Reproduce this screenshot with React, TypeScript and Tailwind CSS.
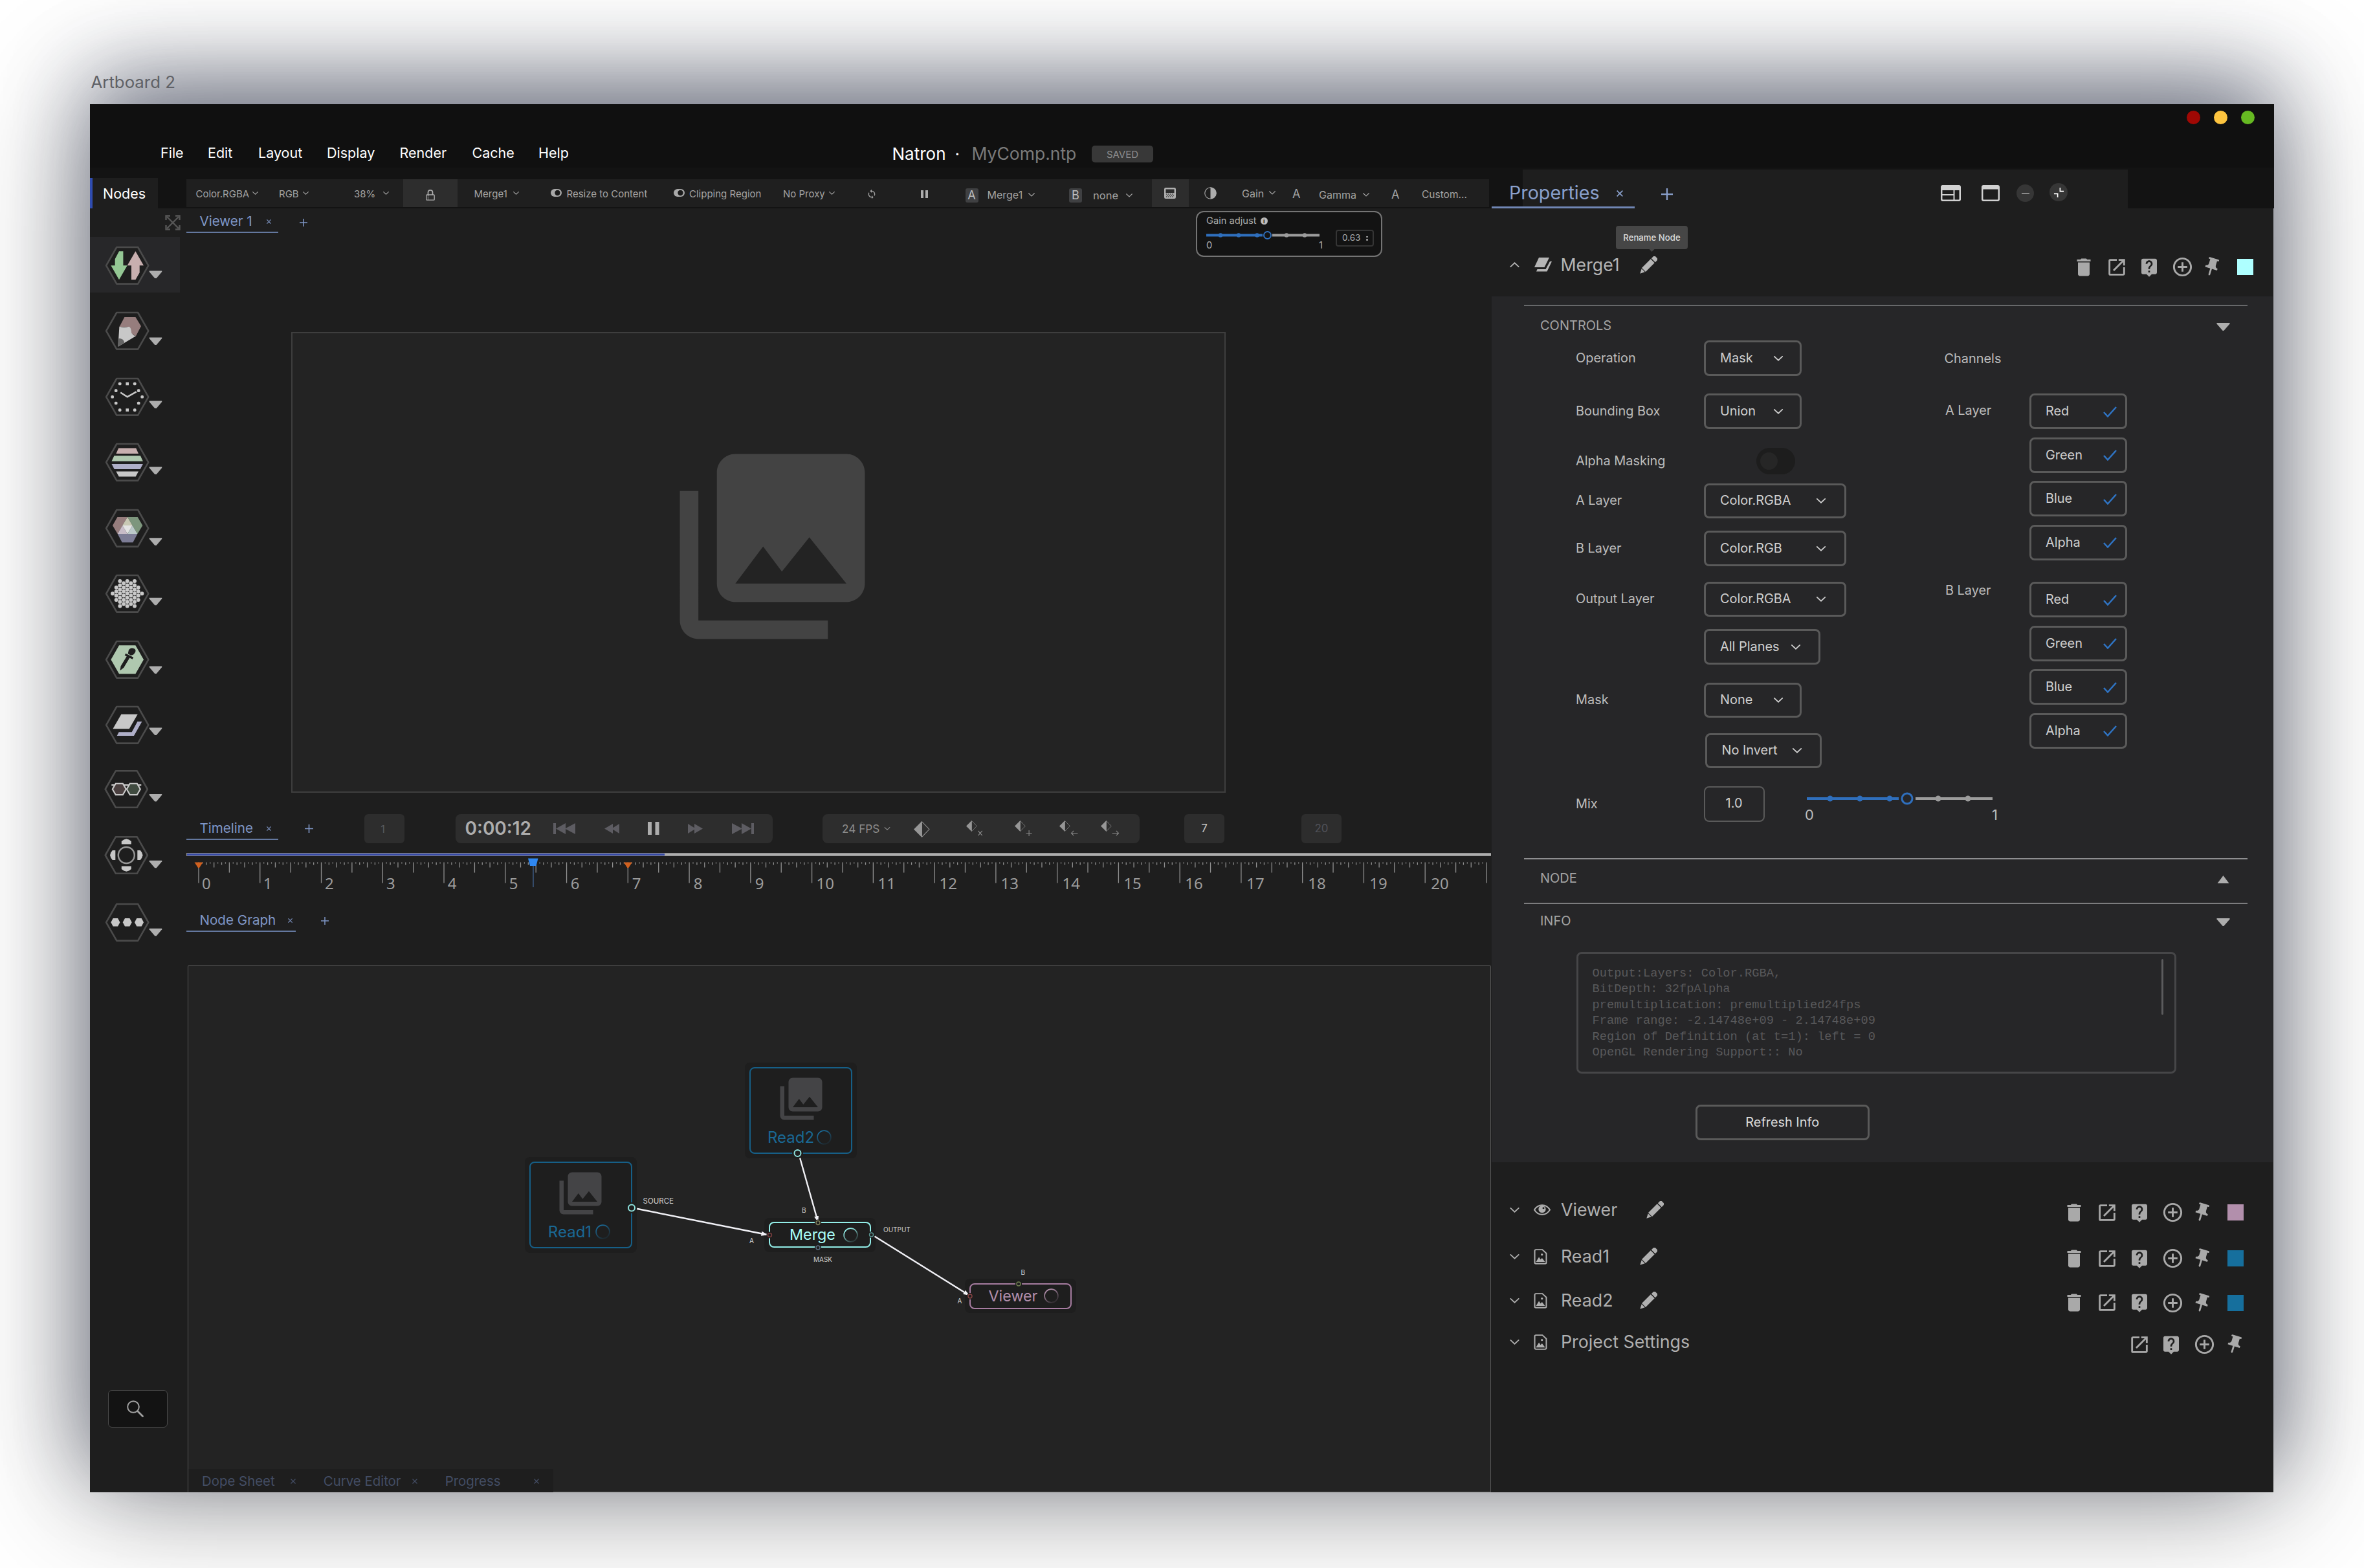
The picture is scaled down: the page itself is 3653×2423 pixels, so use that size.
import React from "react";
import { MdDelete, MdOpenInNew, MdLiveHelp, MdOutlineAddCircleOutline, MdPushPin, MdSync, MdPhotoLibrary } from "react-icons/md";

/* ---------- small shared drawings ---------- */

function Chevron({ className = "", up = false }: { className?: string; up?: boolean }) {
  return (
    <svg viewBox="0 0 16 9" fill="none" stroke="currentColor" className={"shrink-0 overflow-visible " + className}>
      <path d={up ? "M1 8 8 1.5 15 8" : "M1 1 8 7.5 15 1"} strokeWidth="2" strokeLinecap="round" />
    </svg>
  );
}

function Plus({ className = "size-[13px]" }: { className?: string }) {
  return (
    <svg viewBox="0 0 12 12" stroke="currentColor" strokeWidth="1.5" className={"shrink-0 " + className}>
      <path d="M6 0V12M0 6H12" />
    </svg>
  );
}

function Cross({ className = "size-[7px]" }: { className?: string }) {
  return (
    <svg viewBox="0 0 8 8" stroke="currentColor" strokeWidth="1.3" className={"shrink-0 " + className}>
      <path d="M.5 .5 7.5 7.5M7.5 .5 .5 7.5" />
    </svg>
  );
}

function Triangle({ up = false }: { up?: boolean }) {
  return (
    <svg viewBox="0 0 20 12" className="h-3 w-[21px] shrink-0" fill="#adadad">
      <path d={up ? "M1 12 10 0 19 12Z" : "M0 0H20V1.5L10.8 12H9.2L0 1.5Z"} />
    </svg>
  );
}

function Pencil() {
  return (
    <svg viewBox="0 0 27 27" className="size-[27px] shrink-0" fill="currentColor">
      <g transform="translate(0.3 26.7) rotate(-45)">
        <path d="M0 0 7 -3.6V3.6Z" />
        <path d="M8 -4.2H27.5V4.2H8Z" />
        <path d="M29 -4.2H32.5Q35.5 -4.2 35.5 -1.5V1.5Q35.5 4.2 32.5 4.2H29Z" />
      </g>
    </svg>
  );
}

function EyeIcon() {
  return (
    <svg viewBox="0 0 26 17" className="h-[17px] w-[26px]" fill="none" stroke="currentColor" strokeWidth="2">
      <path d="M1 8.5C4 3.5 8.200 1.200 13 1.200S22 3.500 25 8.500C22 13.500 17.800 15.800 13 15.800S4 13.500 1 8.500Z" />
      <circle cx="13" cy="7.500" r="5.600" fill="currentColor" stroke="none" />
      <circle cx="15" cy="5.800" r="1.500" fill="#1e1e1e" stroke="none" />
    </svg>
  );
}

function DocIcon() {
  return (
    <svg viewBox="0 0 21 25" className="h-[24px] w-[21px]" fill="none" stroke="currentColor" strokeWidth="2">
      <path d="M3 1.200H13.500L19.800 7V22Q19.800 23.800 18 23.800H3Q1.200 23.800 1.200 22V3Q1.200 1.200 3 1.200Z" />
      <path d="M3 21 8 13 10.500 17 13 14.500 18 21Z" fill="currentColor" stroke="none" />
      <circle cx="12.800" cy="9" r="1.700" fill="currentColor" stroke="none" />
    </svg>
  );
}

function MergeIcon() {
  return (
    <svg viewBox="0 0 28 22" className="h-[22px] w-[28px]" fill="currentColor">
      <path d="M8 0H24L16.500 15H1Z" />
      <path d="M25 6H28L20.500 21.500H4L5.500 18H18.500Z" />
    </svg>
  );
}

function Ring({ id, color }: { id: string; color: string }) {
  return (
    <svg viewBox="0 0 24 24" className="size-[25px] shrink-0">
      <defs>
        <linearGradient id={id} x1="0" y1="0" x2="0.6" y2="1">
          <stop offset="0.2" stopColor={color} />
          <stop offset="1" stopColor={color} stopOpacity="0.15" />
        </linearGradient>
      </defs>
      <circle cx="12" cy="12" r="10" fill="none" stroke={`url(#${id})`} strokeWidth="1.6" />
    </svg>
  );
}

/* ---------- node toolbox ---------- */

const dots: [number, number][] = [];
[
  [0, 7],
  [5.6, 6],
  [11.3, 7],
  [17, 4],
  [22.7, 1],
].forEach(([x, n]) => {
  for (let i = 0; i < n; i++) {
    const y = (i - (n - 1) / 2) * 6.4;
    dots.push([x, y]);
    if (x) dots.push([-x, y]);
  }
});

const clockMarks = [
  [23, 0], [-23, 0], [17.5, 9.7], [17.5, -9.7], [-17.5, 9.7], [-17.5, -9.7],
  [11.5, 20.3], [11.5, -20.3], [-11.5, 20.3], [-11.5, -20.3], [0, 20.3], [0, -20.3],
];

const tools: { name: string; caret: number; dx?: number; dy?: number; art: React.ReactNode }[] = [
  {
    name: "Image",
    caret: 8.8,
    art: (
      <>
        <path fill="#94c794" d="M-19-10-12.700-22H-6.300V0H0L-12.700 22-25.300 0H-19Z" />
        <path fill="#c8afaf" d="M12.700-22 25.300 0H19V11L12.700 22H6.300V0H0Z" />
      </>
    ),
  },
  {
    name: "Draw",
    caret: 10.7,
    art: (
      <>
        <path fill="#967d7d" d="M-4.300-21.400H12.700L21.300-7.300 13.300 8 6.300 4.200 2.700-6-12.300-6Z" />
        <path fill="#c8c8c8" d="M-12.300-6.500Q-5-4.500 2.700-6.500 6-5 6.500 3.400 9 7 13.300 8L-14.300 24.500Z" />
        <path fill="#646464" d="M-14.300 11.500Q-5 11.500-4.700 18.400L-14.300 24.500Z" />
      </>
    ),
  },
  {
    name: "Time",
    caret: 6.8,
    art: (
      <>
        {clockMarks.map(([x, y], i) => (
          <rect key={i} x={x - 2.3} y={y - 2.3} width="4.6" height="4.6" rx={x ? 1.6 : 0} fill="#c8c8c8" />
        ))}
        <path d="M-10.500-6.800 0 0 14-8" fill="none" stroke="#c8c8c8" strokeWidth="2.600" />
      </>
    ),
  },
  {
    name: "Channel",
    caret: 7.6,
    art: (
      <>
        <path fill="#c8afaf" d="M-13.500-21.800H13.500L17.300-13.400H-17.300Z" />
        <path fill="#afc8af" d="M-20.300-10H20.300L24.200-1.500H-24.200Z" />
        <path fill="#afafc8" d="M-24.200 2.700H24.200L20 10.700H-20Z" />
        <path fill="#c8c8c8" d="M-17.300 14.200H17.300L13 22.200H-13Z" />
      </>
    ),
  },
  {
    name: "Color",
    caret: 15.4,
    art: (
      <>
        <path fill="#967d7d" d="M-15.300-17.200H.3L-15 8.800-22.700-4.200Z" />
        <path fill="#7d967d" d="M.3-17.200H16L23.700-4.200 15.700 8.800Z" />
        <path fill="#7d7d96" d="M-15 8.800H15.700L8.700 22H-8Z" />
        <path fill="#c8c8b4" d="M.3-17.200 8-4.200H-7.500Z" />
        <path fill="#c8bcc8" d="M-7.500-4.200-15 8.800H.3Z" />
        <path fill="#bccaca" d="M8-4.200 15.700 8.800H.3Z" />
        <path fill="#e3e3e3" d="M-7.500-4.200H8L.3 8.800Z" />
      </>
    ),
  },
  {
    name: "Filter",
    caret: 7,
    art: dots.map(([x, y], i) => <circle key={i} cx={x} cy={y} r="3" fill="#c8c8c8" />),
  },
  {
    name: "Keyer",
    caret: 10.7,
    art: (
      <>
        <path fill="#afc8af" d="M-25.300 0-12.700-22H12.700L25.300 0 12.700 22H-12.700Z" />
        <g fill="#1e1e1e">
          <path d="M2-14Q4-18.500 9-17.500 14-16.500 12.500-12 10.500-7 5.500-6.500L1-9Z" />
          <path d="M-2.500-9.500 9.500-3.500 8-.5-4-6.500Z" />
          <path d="M.5-7.500 5-5-5.500 12.500-10.500 16.500-11 15.500-10 10Z" />
        </g>
      </>
    ),
  },
  {
    name: "Merge",
    caret: 4.6,
    art: (
      <>
        <path fill="#c8c8c8" d="M-9.300-16.500H16L3 6H-22.300Z" />
        <path fill="#afafc8" d="M15.700-5.400H22.700L10.300 16.800H-16L-13 11H7Z" />
      </>
    ),
  },
  {
    name: "Views",
    caret: 8,
    dx: -1.4,
    dy: -2.8,
    art: (
      <g stroke="#c8c8c8" strokeWidth="2.200">
        <path d="M-23-6.300H23" />
        <path fill="#4b4040" d="M-21.500 0-16.500-8.700H-5.500L-.5 0-5.500 8.700H-16.500Z" />
        <path fill="#404b40" d="M21.500 0 16.500-8.700H5.500L.5 0 5.500 8.700H16.500Z" />
      </g>
    ),
  },
  {
    name: "Transform",
    caret: 8.7,
    dx: -1.4,
    dy: -1.8,
    art: (
      <>
        <circle r="12.500" fill="none" stroke="#969696" strokeWidth="2.400" />
        {[0, 90, 180, 270].map((a) => (
          <path key={a} transform={`rotate(${a})`} fill="#c8c8c8" d="M0-25.300 4-24 7.500-21.500V-17H-7.500V-21.500L-4-24Z" />
        ))}
      </>
    ),
  },
  {
    name: "Other",
    caret: 10,
    art: [-18.3, 0, 18.3].map((x) => (
      <path key={x} transform={`translate(${x} 0)`} fill="#c8c8c8" d="M-7 0-3.700-6.300H3.700L7 0 3.700 6.300H-3.700Z" />
    )),
  },
];

function Sidebar() {
  return (
    <aside className="flex w-[148.5px] shrink-0 flex-col">
      <div className="flex h-[43.5px] items-start justify-end pt-[10px] pr-[9px]">
        <svg viewBox="0 0 24 24" className="size-[24px]" fill="none" stroke="#565656" strokeWidth="2.400">
          <path d="M3 3 21 21M21 3 3 21" />
          <path d="M1.500 8V1.500H8M16 1.500H22.500V8M22.500 16V22.500H16M8 22.500H1.500V16" />
        </svg>
      </div>
      <div className="flex flex-col gap-[15.5px]">
        {tools.map((t, i) => {
          const dy = t.dy ?? 0;
          return (
            <div key={t.name} className={"h-[86px] w-[139px] " + (i === 0 ? "bg-[#272729]" : "")}>
              <svg viewBox="0 0 139 86" className="h-[86px] w-[139px]">
                <g transform={`translate(${57.7 + (t.dx ?? 0)} ${44.3 + dy})`}>
                  <path
                    d="M-32.600 0-16.400-28.300H16.400L32.600 0 16.400 28.300H-16.400Z"
                    fill="#1e1e1e"
                    stroke="#4b4b4b"
                    strokeWidth="2.600"
                    strokeLinejoin="round"
                  />
                  {t.art}
                </g>
                <path transform={`translate(91.700 ${44.3 + dy + t.caret - 0.5})`} fill="#adadad" d="M0 0H19.500V1.500L11 11.500H8.500L0 1.500Z" />
              </svg>
            </div>
          );
        })}
      </div>
      <div className="mt-[681px] ml-[28px] flex h-[58px] w-[92px] items-center justify-center rounded-md border-[1.500px] border-[#4a4a4a] bg-[#131313] pr-2">
        <svg viewBox="0 0 26 26" className="size-[26px]" fill="none" stroke="#a0a0a0" strokeWidth="2" strokeLinecap="round">
          <circle cx="10" cy="10" r="8.800" />
          <path d="M16.500 16.500 24.500 24.500" strokeWidth="2.800" />
        </svg>
      </div>
    </aside>
  );
}

/* ---------- title bar, menus and tool strip ---------- */

function TitleBar() {
  return (
    <div className="h-[98px] w-[3375px] bg-[#101010]">
      <div className="flex h-[40px] items-center justify-end gap-[21px] pr-[30px]">
        <span className="size-[21px] rounded-full bg-[#a00804]" />
        <span className="size-[21px] rounded-full bg-[#fdc43f]" />
        <span className="size-[21px] rounded-full bg-[#66b922]" />
      </div>
      <div className="grid h-[58px] grid-cols-[109px_73px_78px_106px_112.5px_112px_102.5px_546.5px_97px_26px_185.5px_95px] items-center pt-[13px] text-[21.500px] leading-none whitespace-nowrap text-white">
        <span />
        <span>File</span>
        <span>Edit</span>
        <span>Layout</span>
        <span>Display</span>
        <span>Render</span>
        <span>Cache</span>
        <span>Help</span>
        <span className="mt-[2px] text-[26px]">Natron</span>
        <span className="mt-[2px] text-[26px]">·</span>
        <span className="mt-[2px] text-[26.500px] text-[#7a7a7a]">MyComp.ntp</span>
        <span className="mt-[3px] flex h-[26px] items-center justify-center rounded-[5px] bg-[#383838] text-[15px] text-[#8d8d8d]">SAVED</span>
      </div>
    </div>
  );
}

const smallChev = "h-[5px] w-[9px]";

function SwitchGlyph() {
  return (
    <svg viewBox="0 0 17 12" className="h-[12px] w-[17px]">
      <rect width="17" height="12" rx="6" fill="#a9a9a9" />
      <circle cx="10.500" cy="6" r="4.200" fill="#1b1b1b" />
    </svg>
  );
}

function ToolStrip() {
  return (
    <div className="mb-[2px] grid h-[43.5px] w-[2013.5px] grid-cols-[15px_87.5px_41px_36.5px_79.5px_45px_31px_84px_25.5px_60.5px_58px_24.5px_165.5px_24px_145px_71px_60px_82px_68.5px_34px_63.5px_63px_37px_51px_39.5px_57.5px_24px_58px_42px_36px_41px_68px_44px_47px_1fr] items-center bg-[#1f1f1f] text-[15px] leading-none whitespace-nowrap text-[#a3a3a3]">
      <span />
      <span className="pt-[3px]">Color.RGBA</span>
      <Chevron className={smallChev} />
      <span className="pt-[3px]">RGB</span>
      <Chevron className={smallChev} />
      <span className="pt-[3px]">38%</span>
      <Chevron className={smallChev} />
      <span className="flex h-full items-center justify-center bg-[#2d2d2d]">
        <svg viewBox="0 0 14 17" className="mt-[6px] h-[17px] w-[14px]" fill="none" stroke="#adadad" strokeWidth="1.300">
          <path d="M3.500 8V4.500C3.500 2 5 .8 7 .8S10.500 2 10.500 4.500V8" strokeWidth="1.700" />
          <rect x=".8" y="8" width="12.400" height="8.200" rx="1" />
          <path d="M3.500 9V16" strokeDasharray="1.200 1" />
        </svg>
      </span>
      <span />
      <span className="pt-[2px]">Merge1</span>
      <Chevron className={smallChev} />
      <SwitchGlyph />
      <span className="pt-[3px]">Resize to Content</span>
      <SwitchGlyph />
      <span className="pt-[3px]">Clipping Region</span>
      <span className="pt-[3px]">No Proxy</span>
      <Chevron className={smallChev} />
      <MdSync className="mt-[4px] -ml-[2px] size-[16px]" />
      <span className="mt-[4px] flex gap-[3px]">
        <i className="h-[12px] w-[4px] bg-[#adadad]" />
        <i className="h-[12px] w-[4px] bg-[#adadad]" />
      </span>
      <span className="mt-[7px] flex h-[22px] w-[20px] items-center justify-center rounded-[3px] bg-[#3f4042] text-[18px] text-[#bdbdbd]">A</span>
      <span className="pt-[6px] text-base">Merge1</span>
      <Chevron className="mt-[6px] h-[6px] w-[10px]" />
      <span className="mt-[7px] flex h-[22px] w-[20px] items-center justify-center rounded-[3px] bg-[#3f4042] text-[18px] text-[#bdbdbd]">B</span>
      <span className="pt-[8px] text-[16.500px]">none</span>
      <Chevron className="mt-[8px] h-[6px] w-[10px]" />
      <span className="flex h-full items-center justify-center bg-[#2d2d2d]">
        <svg viewBox="0 0 18 17" className="h-[17px] w-[18px]">
          <rect x=".8" y=".8" width="16.400" height="15.400" rx="1.500" fill="#a9a9a9" stroke="#b5b5b5" strokeWidth="1.500" />
          <rect x="2.500" y="2.500" width="13" height="5.500" fill="#2d2d2d" />
          <path d="M3 10H15M4.500 12H15M3 14H15" stroke="#444" strokeWidth="1.300" strokeDasharray="1.500 1.500" />
        </svg>
      </span>
      <span />
      <svg viewBox="0 0 18 18" className="size-[19px]">
        <circle cx="9" cy="9" r="8.300" fill="none" stroke="#adadad" strokeWidth="1" />
        <path d="M9 .5A8.500 8.500 0 0 1 9 17.500Z" fill="#adadad" />
      </svg>
      <span className="pt-[2px] text-base">Gain</span>
      <Chevron className="h-[6px] w-[10px]" />
      <span className="pt-[4px] text-[18px]">A</span>
      <span className="pt-[5px] text-base">Gamma</span>
      <Chevron className="mt-[5px] h-[6px] w-[10px]" />
      <span className="pt-[5px] text-[18px]">A</span>
      <span className="pt-[4px] text-[15.500px]">Custom...</span>
    </div>
  );
}

function PropertiesTab() {
  return (
    <div className="grid h-[60px] w-[983px] grid-cols-[220.5px_473.5px_63px_54px_51px_1fr] items-end bg-[linear-gradient(90deg,#131313_48px,#1e1e1e_48px)] text-[#8aa0cc]">
      <div className="flex h-[48px] items-center justify-between border-b-[3px] border-[#7086b4] pt-[4px] pr-[18px] pl-[27px] text-[28.700px] leading-none">
        <span>Properties</span>
        <Cross className="size-[10px]" />
      </div>
      <span className="mb-[13px] pl-[41px]">
        <Plus className="size-[18px]" />
      </span>
      <svg viewBox="0 0 31 25" className="mb-[11px] h-[25px] w-[31px]" fill="none" stroke="#d2d2d2" strokeWidth="2.500">
        <rect x="1.200" y="1.200" width="28.600" height="22.600" rx="2" />
        <path d="M1 5H30" strokeWidth="6" />
        <path d="M1 15H20M20.500 8V24" strokeWidth="2" />
      </svg>
      <svg viewBox="0 0 28 25" className="mb-[11px] h-[25px] w-[28px]" fill="none" stroke="#d2d2d2" strokeWidth="2.500">
        <rect x="1.200" y="1.200" width="25.600" height="22.600" rx="2" />
        <path d="M1 4H27" strokeWidth="5" />
      </svg>
      <span className="mb-[10px] flex size-[27px] items-center justify-center rounded-full bg-[#363636]">
        <i className="h-[2px] w-[12px] bg-[#8a8a8a]" />
      </span>
      <span className="mb-[11px] flex size-[28px] items-center justify-center rounded-full bg-[#363636]">
        <svg viewBox="0 0 18 18" className="size-[17px]" fill="none" stroke="#fff" strokeWidth="1.800">
          <path d="M11 1V7H17M7 17V11H1" />
        </svg>
      </span>
    </div>
  );
}

function Header() {
  return (
    <header className="shrink-0">
      <TitleBar />
      <div className="flex h-[63px] w-[3375px] items-end bg-[#131313] leading-none">
        <div className="mr-[43.5px] flex h-[47px] w-[105px] items-center border-l-[4.500px] border-[#2f4cb0] bg-[#1e1e1e] pt-[2px] pl-[16px] text-[21.500px] text-white">
          Nodes
        </div>
        <ToolStrip />
        <div className="w-[4px]" />
        <PropertiesTab />
      </div>
    </header>
  );
}

/* ---------- viewer, timeline, graph ---------- */

function Tab({ label, className }: { label: string; className: string }) {
  return (
    <div className={"flex h-[38px] items-center justify-between border-b-2 border-[#64789f] pt-[4px] pl-[21px] text-[20.600px] leading-none whitespace-nowrap text-[#7f96c6] " + className}>
      <span>{label}</span>
      <Cross />
    </div>
  );
}

function Slider({ w, ticksOn, ticksOff, thumb, r, gap, className }: { w: number; ticksOn: number[]; ticksOff: number[]; thumb: number; r: number; gap: number; className: string }) {
  const h = r * 2 + 4;
  const c = h / 2;
  return (
    <svg viewBox={`0 0 ${w} ${h}`} className={className}>
      <path d={`M0 ${c}H${thumb - gap}`} stroke="#2f6fbd" strokeWidth="4" />
      <path d={`M${thumb + gap} ${c}H${w}`} stroke="#9c9c9c" strokeWidth="4" />
      {ticksOn.map((t) => (
        <circle key={t} cx={t} cy={c} r={r * 0.5} fill="#2f6fbd" />
      ))}
      {ticksOff.map((t) => (
        <circle key={t} cx={t} cy={c} r={r * 0.5} fill="#9c9c9c" />
      ))}
      <circle cx={thumb} cy={c} r={r - 1} fill="none" stroke="#2f6fbd" strokeWidth={r > 8 ? 3 : 2} />
    </svg>
  );
}

function GainPopup() {
  return (
    <div className="absolute top-[4px] left-[1560px] z-10 flex h-[71px] w-[288.5px] rounded-xl border-2 border-[#747474] bg-[#131313] pl-[14.5px] text-[14.700px] leading-none text-[#adadad]">
      <div className="w-[200px]">
        <div className="flex h-[27px] items-center gap-[6px]">
          Gain adjust
          <span className="flex size-[11px] items-center justify-center rounded-full bg-[#bdbdbd] text-[9px] font-bold text-[#131313]">i</span>
        </div>
        <Slider w={175} thumb={94.5} r={6.5} gap={7.5} ticksOn={[22, 50, 78.5]} ticksOff={[124, 152]} className="h-[17px] w-[175px]" />
        <div className="flex w-[180px] justify-between">
          <span>0</span>
          <span>1</span>
        </div>
      </div>
      <div className="mt-[27px] flex h-[26px] w-[59px] items-center gap-[9px] rounded-[4px] border-2 border-[#353535] pl-[8px] text-[13.500px]">
        0.63
        <span className="flex flex-col gap-[2px]">
          <i className="size-[2.5px] rounded-full bg-[#adadad]" />
          <i className="size-[2.5px] rounded-full bg-[#adadad]" />
        </span>
      </div>
    </div>
  );
}

function Box({ children, className = "" }: { children: React.ReactNode; className?: string }) {
  return <div className={"flex h-[44.5px] items-center justify-center rounded-md bg-[#2d2d2d] pt-px " + className}>{children}</div>;
}

function Diamond({ className }: { className: string }) {
  return (
    <svg viewBox="0 0 24 24" className={className}>
      <path d="M12 .5 23 12 12 23.500Z" fill="none" stroke="#8f8f8f" strokeWidth="1" />
      <path d="M12 0V24L0 12Z" fill="#969696" />
    </svg>
  );
}

const keyMarks = ["M1 1 8 9M8 1 1 9", "M5 0V10M0 5H10", "M12 5H1M5 1 1 5 5 9", "M0 5H11M7 1 11 5 7 9"];

function TimelineBar() {
  return (
    <div className="grid h-[44.5px] grid-cols-[142.5px_132.5px_62px_79.5px_489.5px_77.5px_489.5px_69.5px_62px_119px_62px] items-start leading-none">
      <Tab label="Timeline" className="mt-[2px] pr-[11px]" />
      <span className="pt-[16px] pl-[40.5px] text-[#7f96c6]">
        <Plus />
      </span>
      <Box className="pr-[4px] text-[16.500px] text-[#5a5a5c]">1</Box>
      <span />
      <div className="grid h-[44.5px] grid-cols-[14.5px_136.5px_79px_67px_61.5px_68px_1fr] items-center rounded-lg bg-[#2d2d2d] whitespace-nowrap">
        <span />
        <span className="text-[28px] font-semibold text-[#adadad]">0:00:12</span>
        <svg viewBox="0 0 34 17" className="h-[17px] w-[34px]" fill="#5d5c62">
          <path d="M0 0H4V17H0ZM19 0V17L4 8.500ZM34 0V17L18 8.500Z" />
        </svg>
        <svg viewBox="0 0 23 17" className="h-[17px] w-[23px]" fill="#5d5c62">
          <path d="M13 1V16L0 8.500ZM23 1V16L11 8.500Z" />
        </svg>
        <svg viewBox="0 0 18 20" className="h-[20px] w-[18px]" fill="#adadad">
          <path d="M0 0H6V20H0ZM11.500 0H17.500V20H11.500Z" />
        </svg>
        <svg viewBox="0 0 23 17" className="h-[17px] w-[23px]" fill="#5d5c62">
          <path d="M0 1V16L12 8.500ZM10 1V16L23 8.500Z" />
        </svg>
        <svg viewBox="0 0 34 17" className="h-[17px] w-[34px]" fill="#5d5c62">
          <path d="M0 0V17L16 8.500ZM15 0V17L30 8.500ZM30 0H34V17H30Z" />
        </svg>
      </div>
      <span />
      <div className="grid h-[44.5px] grid-cols-[30px_65px_45.5px_81.5px_75px_68.5px_64px_1fr] items-center rounded-lg bg-[#2d2d2d] whitespace-nowrap text-[#8b8b8b]">
        <span />
        <span className="text-[17.200px]">24 FPS</span>
        <Chevron className="h-[5px] w-[10px]" />
        <Diamond className="mt-[2px] size-[25px]" />
        {keyMarks.map((d, i) => (
          <span key={i} className="flex h-[24px] items-start">
            <Diamond className="size-[17px] shrink-0" />
            <svg viewBox="0 0 12 10" className="mt-[15px] h-[9px] w-[12px]" fill="none" stroke="#8b8b8b" strokeWidth="1.200">
              <path d={d} />
            </svg>
          </span>
        ))}
      </div>
      <span />
      <Box className="text-[17px] text-[#c4c4c4]">7</Box>
      <span />
      <Box className="text-[17px] text-[#505158]">20</Box>
    </div>
  );
}

function Ruler() {
  const pitch = 94.76;
  const x0 = 19;
  const ticks: string[] = [];
  for (let i = 0; i <= 21 * 16; i++) {
    const len = i % 16 === 0 ? 32 : i % 8 === 0 ? 16 : i % 4 === 0 ? 8 : i % 2 === 0 ? 4 : 2;
    ticks.push(`M${(x0 + (i * pitch) / 16).toFixed(2)} 9.500v${len}`);
  }
  return (
    <svg viewBox="0 0 2017 79" className="h-[79px] w-[2017px] shrink-0">
      <path d={ticks.join("")} stroke="#8f8f8f" strokeWidth="1.300" />
      {Array.from({ length: 21 }, (_, i) => (
        <text key={i} x={x0 + 5 + i * (pitch + 0.2)} y="50.500" fontSize="24" fill="#9c9c9c" className="font-['Noto_Sans',sans-serif]">
          {i}
        </text>
      ))}
      {[0, 7].map((i) => (
        <path key={i} transform={`translate(${x0 + i * pitch} 9.500)`} d="M-6.500 0H6.500L1 8.500H-1Z" fill="#d0601f" />
      ))}
      <path d="M536 10V48" stroke="#44699c" strokeWidth="1.200" />
      <path d="M528 3.500H543.500L540.500 15H531Z" fill="#2f88f2" />
    </svg>
  );
}

function ReadNode({ name, color, className, gap }: { name: string; color: string; className: string; gap: string }) {
  return (
    <div className={"absolute rounded-lg bg-[#1e1e1e] p-[7px] " + className}>
      <div className="flex h-[134.5px] w-[159px] flex-col items-center rounded-[8px] border-2 border-[#165f87] pt-[8px] leading-none text-[#1a6894]">
        <MdPhotoLibrary className="size-[78px] text-[#444446]" />
        <span className={"mt-[8.500px] mr-[3px] flex items-center text-[24px] " + gap}>
          {name}
          <Ring id={"ring-" + name} color={color} />
        </span>
      </div>
    </div>
  );
}

function NodeGraph() {
  return (
    <div className="relative mt-[51px] ml-[2.500px] flex h-[815px] w-[2013.500px] flex-col justify-end rounded-t-[3px] border border-[#555] bg-[#232323]">
      <ReadNode name="Read2" color="#1a6894" gap="gap-[3px]" className="top-[149.500px] left-[860px]" />
      <ReadNode name="Read1" color="#1a6894" gap="gap-[5px]" className="top-[295.500px] left-[519.500px]" />
      <div className="absolute top-[389.500px] left-[890px] rounded-lg bg-[#1e1e1e] p-[6.500px]">
        <div className="flex h-[40px] w-[158.5px] items-center gap-[11px] rounded-[8px] border-[2.500px] border-[#93eee8] pl-[30.500px] text-[23.300px] leading-none text-[#a8fffb]">
          Merge
          <Ring id="ring-merge" color="#93eee8" />
        </div>
      </div>
      <div className="absolute top-[484px] left-[1200px] rounded-lg bg-[#1e1e1e] p-[6.500px]">
        <div className="flex h-[40px] w-[158.5px] items-center gap-[9px] rounded-[8px] border-2 border-[#a67ca0] pl-[28px] text-[23.300px] leading-none text-[#b28fac]">
          Viewer
          <Ring id="ring-viewer" color="#b28fac" />
        </div>
      </div>
      <svg viewBox="290.500 1492 2011 813" className="pointer-events-none absolute top-0 left-0 h-[813px] w-[2011px]">
        <defs>
          <marker id="arrow" viewBox="0 0 10 8" refX="9" refY="4" markerWidth="10" markerHeight="8" markerUnits="userSpaceOnUse" orient="auto">
            <path d="M0 .5 10 4 0 7.500Z" fill="#f1f1f6" />
          </marker>
        </defs>
        <g stroke="#f1f1f6" strokeWidth="2.400">
          <path d="M982 1867.500 1185 1908" markerEnd="url(#arrow)" />
          <path d="M1235.500 1789 1263.500 1888" markerEnd="url(#arrow)" />
          <path d="M1351 1910.500 1497 2001.500" markerEnd="url(#arrow)" />
        </g>
        {[
          [1232, 1782, 5, "#8fe3de"],
          [975.5, 1866.5, 5, "#8fe3de"],
          [1189, 1908.5, 3, "#7d3f3f"],
          [1263.5, 1889.5, 3, "#80805a"],
          [1346, 1908, 3, "#5b9490"],
          [1263.5, 1928, 3, "#5a6d80"],
          [1498.5, 2003, 3, "#8a4444"],
          [1573.5, 1984, 3, "#708050"],
        ].map(([x, y, r, c]) => (
          <g key={`${x}-${y}`}>
            <circle cx={x} cy={y} r={Number(r) * 1.7} fill="#1e1e1e" />
            <circle cx={x} cy={y} r={r} fill="#1e1e1e" stroke={String(c)} strokeWidth={Number(r) > 4 ? 2 : 1.4} />
          </g>
        ))}
        <g fill="#cfcfcf" fontSize="10" className="font-['Inter',sans-serif]">
          <text x="993" y="1860" fontSize="11.500">SOURCE</text>
          <text x="1238.500" y="1873.500">B</text>
          <text x="1157.500" y="1920.500">A</text>
          <text x="1364.500" y="1904">OUTPUT</text>
          <text x="1256.500" y="1950">MASK</text>
          <text x="1577" y="1969.500">B</text>
          <text x="1479" y="2013.500">A</text>
        </g>
      </svg>
      <div className="-mb-px flex h-[36px] w-[563.5px] bg-[#1e1e1e] text-[20.400px] leading-none whitespace-nowrap text-[#434d64]">
        {["Dope Sheet", "Curve Editor", "Progress"].map((t) => (
          <div key={t} className="flex w-[188px] items-center justify-between pt-[2px] pr-[21.500px] pl-[21px]">
            {t}
            <Cross className="size-[8px]" />
          </div>
        ))}
      </div>
    </div>
  );
}

function Workspace() {
  return (
    <main className="relative w-[2017.5px] shrink-0">
      <GainPopup />
      <div className="flex h-[38px] items-center text-[#7f96c6]">
        <Tab label="Viewer 1" className="w-[142.5px] pr-[11px]" />
        <Plus className="mt-[6px] ml-[33px] size-[12px]" />
      </div>
      <div className="mt-[153px] ml-[162px] flex h-[712px] w-[1444px] items-center justify-center border-2 border-[#3e3e3e] bg-[#232323]">
        <MdPhotoLibrary className="mr-[-44px] mb-[50px] size-[343px] text-[#434343]" />
      </div>
      <div className="h-[33px]" />
      <TimelineBar />
      <div className="mt-[15.5px] flex h-[5px] w-[2016px] border-y border-[#8d8d8d] bg-[#adadad]">
        <div className="w-[739px] border-l border-[#8d8d8d] bg-[#3549a8]" />
      </div>
      <Ruler />
      <div className="flex h-[38px] items-center text-[#7f96c6]">
        <Tab label="Node Graph" className="w-[169.5px] pr-[5px]" />
        <Plus className="mt-[3px] ml-[39px] size-[12px]" />
      </div>
      <NodeGraph />
    </main>
  );
}

/* ---------- properties ---------- */

function Actions({ swatch, full = true, className = "" }: { swatch?: string; full?: boolean; className?: string }) {
  const common = (
    <>
      <MdOpenInNew className="size-[34px]" />
      <MdLiveHelp className="-ml-[2px] size-[32px]" />
      <MdOutlineAddCircleOutline className="-ml-[1px] size-[35px]" />
      <MdPushPin className="-ml-[3px] size-[33px] rotate-[17deg]" />
    </>
  );
  return full ? (
    <div className={"ml-auto grid grid-cols-[51px_51px_50px_52px_41px_42.5px] items-center justify-items-center text-[#a9a9a9] " + className}>
      <MdDelete className="size-[36px]" />
      {common}
      <i className={"size-[25px] justify-self-end " + swatch} />
    </div>
  ) : (
    <div className={"ml-auto grid grid-cols-[51px_50px_52px_41px] items-center justify-items-center text-[#a9a9a9] " + className}>{common}</div>
  );
}

function NodeRow({ name, icon, className, pencil = "", actions }: { name: string; icon: React.ReactNode; className: string; pencil?: string | null; actions: React.ReactNode }) {
  return (
    <div className={"flex h-[60px] items-center text-[#b0b0b0] " + className}>
      <div className="w-[37px]">
        <Chevron className="h-[8px] w-[15px]" />
      </div>
      <div className="w-[42px]">{icon}</div>
      <div className="text-[26.800px] leading-none whitespace-nowrap">{name}</div>
      {pencil !== null && (
        <div className={pencil}>
          <Pencil />
        </div>
      )}
      {actions}
    </div>
  );
}

const selectBase = "flex h-[54.5px] items-center justify-between rounded-lg border-[3px] border-[#5a5a5a] pt-px pl-[22.5px] text-[19.900px] leading-none whitespace-nowrap text-[#cfcfcf] ";

function Field({ label, value, width, className = "", children }: { label?: string; value?: string; width?: string; className?: string; children?: React.ReactNode }) {
  return (
    <div className={"flex h-[54.5px] items-center " + className}>
      <div className="w-[197.500px] shrink-0 pt-px text-[19.900px] leading-none whitespace-nowrap text-[#bcbcbc]">{label}</div>
      {value && (
        <div className={selectBase + width}>
          {value}
          <Chevron className="h-[8px] w-[16px]" />
        </div>
      )}
      {children}
    </div>
  );
}

function Channels({ label, className, labelClass }: { label: string; className: string; labelClass: string }) {
  return (
    <div className={"flex " + className}>
      <div className={"w-[129.5px] " + labelClass}>{label}</div>
      <div className="flex flex-col gap-[12.5px]">
        {["Red", "Green", "Blue", "Alpha"].map((c) => (
          <div key={c} className="flex h-[55px] w-[151.5px] items-center justify-between rounded-lg border-[3px] border-[#5a5a5a] pt-px pr-[13px] pl-[22.5px] text-[19.900px] text-[#cfcfcf]">
            {c}
            <svg viewBox="0 0 21 17" className="h-[17px] w-[21px]" fill="none" stroke="#2f74c4" strokeWidth="2.500">
              <path d="M1 9 7 15.500 20 1" />
            </svg>
          </div>
        ))}
      </div>
    </div>
  );
}

const infoLines = [
  "Output:Layers: Color.RGBA,",
  "BitDepth: 32fpAlpha",
  "premultiplication: premultiplied24fps",
  "Frame range: -2.14748e+09 - 2.14748e+09",
  "Region of Definition (at t=1): left = 0",
  "OpenGL Rendering Support:: No",
];

function SectionTitle({ title, up, className }: { title: string; up?: boolean; className: string }) {
  return (
    <div className={"ml-[75px] flex w-[1066px] items-center justify-between text-[20px] leading-none text-[#a3a3a3] " + className}>
      {title}
      <span className="pt-[4px]">
        <Triangle up={up} />
      </span>
    </div>
  );
}

function PropertiesPanel() {
  return (
    <aside className="relative flex w-[1207px] shrink-0 flex-col leading-none">
      <div className="absolute top-[27px] left-[192px] flex flex-col items-center">
        <div className="flex h-[36px] w-[111px] items-center justify-center rounded-[4px] bg-[#464646] pt-px text-[13.200px] font-medium whitespace-nowrap text-[#dadada]">
          Rename Node
        </div>
        <i className="h-[4px] w-[8px] bg-[#464646] [clip-path:polygon(0_0,100%_0,50%_100%)]" />
      </div>
      <div className="flex h-[136px] items-center pt-[38px] pl-[28px] text-[#b5b5b5]">
        <div className="w-[37px]">
          <Chevron up className="h-[8px] w-[15px]" />
        </div>
        <div className="w-[41.500px]">
          <MergeIcon />
        </div>
        <div className="w-[122.500px] text-[26.700px]">Merge1</div>
        <Pencil />
        <Actions swatch="bg-[#aeffff]" className="mt-[7px] mr-[30px]" />
      </div>

      <div className="h-[1337.5px] bg-[#262628] pt-[13px]">
        <div className="ml-[49.5px] h-[2px] w-[1118px] bg-[#67686a]" />
        <SectionTitle title="CONTROLS" className="h-[53px] pt-[6px]" />
        <div className="flex h-[800px] pl-[130px]">
          <div className="w-[569.5px]">
            <Field label="Operation" value="Mask" width="w-[151.5px] pr-[25px]" />
            <Field label="Bounding Box" value="Union" width="w-[151.5px] pr-[25px]" className="mt-[27.5px]" />
            <Field label="Alpha Masking" className="mt-[22.5px]">
              <div className="ml-[81.5px] flex h-[40.5px] w-[60px] items-center rounded-full bg-[#1d1d1d] pl-[6px]">
                <i className="size-[27px] rounded-full bg-[#262626]" />
              </div>
            </Field>
            <Field label="A Layer" value="Color.RGBA" width="w-[220px] pr-[28px]" className="mt-[7px]" />
            <Field label="B Layer" value="Color.RGB" width="w-[220px] pr-[28px]" className="mt-[19px]" />
            <Field label="Output Layer" value="Color.RGBA" width="w-[220px] pr-[28px]" className="mt-[24px]" />
            <Field value="All Planes" width="w-[180px] pr-[27px]" className="mt-[19px]" />
            <Field label="Mask" value="None" width="w-[151.5px] pr-[25px]" className="mt-[28px]" />
            <Field value="No Invert" width="w-[180px] ml-[2.500px] pr-[27px]" className="mt-[23.5px]" />
            <Field label="Mix" className="mt-[28px]">
              <div className="flex h-[55px] w-[94px] shrink-0 items-center justify-center rounded-lg border-2 border-[#5a5a5a] text-[19.900px] text-[#cfcfcf]">1.0</div>
              <div className="ml-[65.500px] shrink-0 pt-[8px]">
                <Slider w={287} thumb={155} r={9} gap={13} ticksOn={[36, 82, 128]} ticksOff={[203, 249]} className="h-[22px] w-[287px]" />
                <div className="-ml-[3px] flex w-[298px] justify-between pt-[3px] text-[22px] text-[#bcbcbc]">
                  <span>0</span>
                  <span>1</span>
                </div>
              </div>
            </Field>
          </div>
          <div className="text-[19.900px] text-[#bcbcbc]">
            <div className="flex h-[82px] items-start pt-[19px]">Channels</div>
            <Channels label="A Layer" className="h-[291px] pl-[1.5px]" labelClass="pt-[17px]" />
            <Channels label="B Layer" className="pl-[1.5px]" labelClass="pt-[4px]" />
          </div>
        </div>
        <div className="ml-[49.5px] h-[2px] w-[1118px] bg-[#8e8e90]" />
        <SectionTitle title="NODE" up className="h-[66.5px] pb-[9px]" />
        <div className="ml-[49.5px] h-[2px] w-[1118px] bg-[#7c7c7e]" />
        <SectionTitle title="INFO" className="h-[54px] pb-px" />
        <div className="mt-[20.5px] ml-[131px] flex h-[188px] w-[926.5px] justify-between rounded-lg border-[3px] border-[#464648] pt-[18px] pr-[17px] pl-[21.5px]">
          <div className="font-['Liberation_Mono',monospace] text-[18.700px] leading-[24.400px] whitespace-pre text-[#59595b]">
            {infoLines.map((l) => (
              <div key={l}>{l}</div>
            ))}
          </div>
          <div className="-mt-[10px] h-[86px] w-[3px] rounded bg-[#5b5b5d]" />
        </div>
        <div className="mt-[48px] ml-[315px] flex h-[54.500px] w-[268.500px] items-center justify-center rounded-lg border-[3px] border-[#5a5a5a] pt-px text-[19.900px] text-[#dcdcdc]">
          Refresh Info
        </div>
      </div>

      <div className="pt-[44px] pl-[28px]">
        <NodeRow name="Viewer" icon={<EyeIcon />} className="" pencil="ml-[45px]" actions={<Actions swatch="bg-[#b28fac]" className="mt-[8px] mr-[45px]" />} />
        <NodeRow name="Read1" icon={<DocIcon />} className="mt-[12px]" pencil="ml-[47px]" actions={<Actions swatch="bg-[#166f9d]" className="mt-[6px] mr-[45px]" />} />
        <NodeRow name="Read2" icon={<DocIcon />} className="mt-[8px]" pencil="ml-[41px]" actions={<Actions swatch="bg-[#166f9d]" className="mt-[7px] mr-[45px]" />} />
        <NodeRow name="Project Settings" icon={<DocIcon />} className="mt-[4px]" pencil={null} actions={<Actions full={false} className="mt-[8px] mr-[38px]" />} />
      </div>
    </aside>
  );
}

export default function App() {
  return (
    <div className="h-[2423px] w-[3653px] overflow-hidden bg-white font-['Inter',sans-serif]">
      <div className="relative z-10 flex h-[161px] items-start pt-[112px] pl-[140.500px] text-[25.800px] leading-[30px] text-[#5f6166]">Artboard 2</div>
      <div className="ml-[139px] flex h-[2145px] w-[3373.5px] flex-col bg-[#1e1e1e] shadow-[0_-42px_118px_rgba(30,40,75,0.4),0_0_180px_rgba(0,0,0,0.45)]">
        <Header />
        <div className="flex">
          <Sidebar />
          <Workspace />
          <PropertiesPanel />
        </div>
      </div>
    </div>
  );
}
